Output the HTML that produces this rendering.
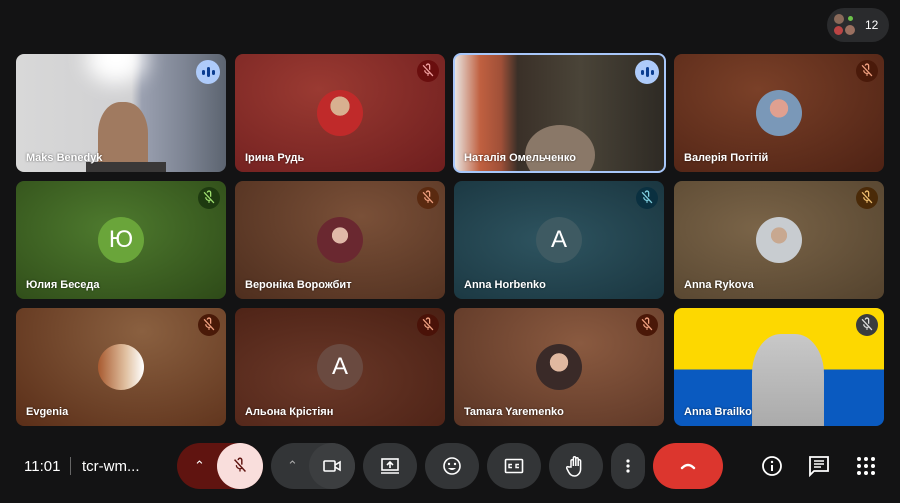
<!DOCTYPE html>
<html><head><meta charset="utf-8"><style>
*{margin:0;padding:0;box-sizing:border-box}
body{width:900px;height:503px;background:#131314;position:relative;overflow:hidden;font-family:"Liberation Sans","DejaVu Sans",sans-serif;color:#fff}
.t{position:absolute;width:210px;height:118px;border-radius:8px;overflow:hidden}
.n{position:absolute;left:10px;bottom:8px;font-size:11px;font-weight:bold;color:#fff;text-shadow:0 0 2px rgba(0,0,0,.6)}
.av{position:absolute;left:82px;top:36px;width:46px;height:46px;border-radius:50%;display:flex;align-items:center;justify-content:center;font-size:24px;color:#fff}
.m{position:absolute;right:6px;top:6px;width:22px;height:22px;border-radius:50%;display:flex;align-items:center;justify-content:center}
.sp{position:absolute;right:6px;top:6px;width:24px;height:24px;border-radius:50%;background:#aecbfa;display:flex;align-items:center;justify-content:center;gap:2px}
.sp i{display:block;width:3px;background:#0b3d91;border-radius:2px}
.b{position:absolute;top:443px;height:46px;border-radius:23px;background:#333537;display:flex;align-items:center;justify-content:center}
</style></head><body>
<svg width="0" height="0" style="position:absolute"><defs>
<g id="mo"><path d="M9 3.5a2 2 0 0 1 4 0v5" fill="none" stroke="currentColor" stroke-width="1.6"/><path d="M7 9a4 4 0 0 0 6 3.4M11 13v3" fill="none" stroke="currentColor" stroke-width="1.4"/><path d="M5 3l12 13" stroke="currentColor" stroke-width="1.6"/></g>
</defs></svg>

<div style="position:absolute;left:827px;top:8px;width:62px;height:34px;border-radius:17px;background:#2a2b2d"></div>
<div style="position:absolute;left:834px;top:14px;width:10px;height:10px;border-radius:50%;background:#8a6a5a"></div>
<div style="position:absolute;left:848px;top:16px;width:5px;height:5px;border-radius:50%;background:#6cc24a"></div>
<div style="position:absolute;left:834px;top:26px;width:9px;height:9px;border-radius:50%;background:#b44"></div>
<div style="position:absolute;left:845px;top:25px;width:10px;height:10px;border-radius:50%;background:#9a7060"></div>
<div style="position:absolute;left:865px;top:18px;font-size:12px">12</div>

<!-- row1 -->
<div class="t" style="left:16px;top:54px;background:linear-gradient(90deg,#d8d8d8 0%,#d0d0d2 55%,#9aa0b0 60%,#7e8594 80%,#5c6470 100%)">
 <div style="position:absolute;left:70px;top:-20px;width:60px;height:50px;border-radius:50%;background:#fff;filter:blur(10px)"></div>
 <div style="position:absolute;left:82px;top:48px;width:50px;height:70px;border-radius:45% 45% 10px 10px;background:#a07a60"></div>
 <div style="position:absolute;left:70px;top:108px;width:80px;height:20px;background:#3a3838"></div>
 <div class="sp"><i style="height:5px"></i><i style="height:10px"></i><i style="height:5px"></i></div>
 <div class="n">Maks Benedyk</div></div>
<div class="t" style="left:235px;top:54px;background:radial-gradient(ellipse at 40% 30%,#9a3a32,#6e1e1e)">
 <div class="av" style="background:radial-gradient(circle at 50% 35%,#d8b090 0 25%,#c02a2a 26% 100%)"></div>
 <div class="m" style="background:#6a0e0e;color:#f1a0a0"><svg width="18" height="18" viewBox="0 0 22 20"><use href="#mo"/></svg></div>
 <div class="n">Ірина Рудь</div></div>
<div class="t" style="left:453px;top:53px;width:213px;height:120px;border:2px solid #a8c7fa;background:linear-gradient(90deg,#e8e4e0 0%,#c06040 12%,#a05038 22%,#3a3028 30%,#4a4438 60%,#2e2a24 100%)">
 <div style="position:absolute;left:70px;top:70px;width:70px;height:60px;border-radius:50%;background:#8a7868"></div>
 <div class="sp" style="right:5px;top:5px"><i style="height:5px"></i><i style="height:10px"></i><i style="height:5px"></i></div>
 <div class="n" style="left:9px;bottom:7px">Наталія Омельченко</div></div>
<div class="t" style="left:674px;top:54px;background:radial-gradient(ellipse at 40% 30%,#7a4028,#4e2214)">
 <div class="av" style="background:radial-gradient(circle at 50% 40%,#e0a090 0 25%,#7a98b8 26% 100%)"></div>
 <div class="m" style="background:#4a1a0a;color:#f0a080"><svg width="18" height="18" viewBox="0 0 22 20"><use href="#mo"/></svg></div>
 <div class="n">Валерія Потітій</div></div>
<!-- row2 -->
<div class="t" style="left:16px;top:181px;background:radial-gradient(ellipse at 45% 40%,#4e7a2e,#2e4a18)">
 <div class="av" style="background:#6aa53a">Ю</div>
 <div class="m" style="background:#1e3a10;color:#a0e070"><svg width="18" height="18" viewBox="0 0 22 20"><use href="#mo"/></svg></div>
 <div class="n">Юлия Беседа</div></div>
<div class="t" style="left:235px;top:181px;background:radial-gradient(ellipse at 60% 30%,#7a5038,#4e2e1e)">
 <div class="av" style="background:radial-gradient(circle at 50% 40%,#e0b8a8 0 22%,#6a2830 23% 100%)"></div>
 <div class="m" style="background:#5a2a10;color:#f0a080"><svg width="18" height="18" viewBox="0 0 22 20"><use href="#mo"/></svg></div>
 <div class="n">Вероніка Ворожбит</div></div>
<div class="t" style="left:454px;top:181px;background:radial-gradient(ellipse at 45% 50%,#2e5460,#1a3640)">
 <div class="av" style="background:#3e5a62">A</div>
 <div class="m" style="background:#0a3040;color:#80d0e0"><svg width="18" height="18" viewBox="0 0 22 20"><use href="#mo"/></svg></div>
 <div class="n">Anna Horbenko</div></div>
<div class="t" style="left:674px;top:181px;background:radial-gradient(ellipse at 40% 40%,#7a6448,#54432e)">
 <div class="av" style="background:radial-gradient(circle at 50% 40%,#c8a890 0 22%,#c8ccd0 23% 100%)"></div>
 <div class="m" style="background:#4a2a08;color:#f0c070"><svg width="18" height="18" viewBox="0 0 22 20"><use href="#mo"/></svg></div>
 <div class="n">Anna Rykova</div></div>
<!-- row3 -->
<div class="t" style="left:16px;top:308px;background:radial-gradient(ellipse at 60% 20%,#8a6040,#5a2e18)">
 <div class="av" style="background:linear-gradient(90deg,#a85a30,#e0c0a0 60%,#fff)"></div>
 <div class="m" style="background:#4a1a08;color:#f0a080"><svg width="18" height="18" viewBox="0 0 22 20"><use href="#mo"/></svg></div>
 <div class="n">Evgenia</div></div>
<div class="t" style="left:235px;top:308px;background:radial-gradient(ellipse at 40% 60%,#6a3828,#4a2014)">
 <div class="av" style="background:#6a4a40">A</div>
 <div class="m" style="background:#4a1208;color:#f0a080"><svg width="18" height="18" viewBox="0 0 22 20"><use href="#mo"/></svg></div>
 <div class="n">Альона Крістіян</div></div>
<div class="t" style="left:454px;top:308px;background:radial-gradient(ellipse at 60% 30%,#8a5a40,#5a3424)">
 <div class="av" style="background:radial-gradient(circle at 50% 40%,#e0b8a0 0 25%,#3a2a28 26% 100%)"></div>
 <div class="m" style="background:#4a1808;color:#f0a080"><svg width="18" height="18" viewBox="0 0 22 20"><use href="#mo"/></svg></div>
 <div class="n">Tamara Yaremenko</div></div>
<div class="t" style="left:674px;top:308px;background:linear-gradient(180deg,#fdd800 0 52%,#0a5ac0 52% 100%)">
 <div style="position:absolute;left:78px;top:26px;width:72px;height:100px;border-radius:40% 40% 0 0;background:linear-gradient(#c8c8c8,#a8a8a8)"></div>
 <div class="m" style="background:#3a3c3e;color:#ddd"><svg width="18" height="18" viewBox="0 0 22 20"><use href="#mo"/></svg></div>
 <div class="n">Anna Brailko</div></div>

<!-- bottom bar -->
<div style="position:absolute;left:24px;top:458px;font-size:15px">11:01</div>
<div style="position:absolute;left:70px;top:457px;width:1px;height:18px;background:#666"></div>
<div style="position:absolute;left:82px;top:458px;font-size:15px">tcr-wm...</div>

<div class="b" style="left:177px;width:86px;background:#601410;justify-content:flex-start;padding-left:17px;font-size:13px">&#8963;</div>
<div class="b" style="left:217px;width:46px;background:#f9dedc;color:#601410"><svg width="20" height="20" viewBox="0 0 22 20"><use href="#mo"/></svg></div>
<div class="b" style="left:271px;width:84px;justify-content:flex-start;padding-left:16px;color:#aaa;font-size:13px">&#8963;</div>
<div class="b" style="left:309px;width:46px;background:#3c3e40"><svg width="18" height="14" viewBox="0 0 18 14"><rect x="1" y="2" width="11" height="10" rx="1" fill="none" stroke="#fff" stroke-width="1.6"/><path d="M12 6l5-3v8l-5-3" fill="none" stroke="#fff" stroke-width="1.6"/></svg></div>
<div class="b" style="left:363px;width:54px"><svg width="20" height="18" viewBox="0 0 20 18"><rect x="2" y="2" width="16" height="11" fill="none" stroke="#fff" stroke-width="1.6"/><path d="M1 16h18M10 11V5M7 8l3-3 3 3" fill="none" stroke="#fff" stroke-width="1.6"/></svg></div>
<div class="b" style="left:425px;width:54px"><svg width="20" height="20" viewBox="0 0 20 20"><circle cx="10" cy="10" r="8" fill="none" stroke="#fff" stroke-width="1.6"/><circle cx="7" cy="8" r="1.2" fill="#fff"/><circle cx="13" cy="8" r="1.2" fill="#fff"/><path d="M6 12q4 4 8 0z" fill="#fff"/></svg></div>
<div class="b" style="left:487px;width:54px"><svg width="20" height="16" viewBox="0 0 20 16"><rect x="1.5" y="1.5" width="17" height="13" rx="1" fill="none" stroke="#fff" stroke-width="1.6"/><path d="M8 6.5H5v3h3M15 6.5h-3v3h3" fill="none" stroke="#fff" stroke-width="1.4"/></svg></div>
<div class="b" style="left:549px;width:54px"><svg width="20" height="22" viewBox="0 0 20 22"><path d="M5 12V6a1.2 1.2 0 0 1 2.4 0v5V3a1.2 1.2 0 0 1 2.4 0v8V4a1.2 1.2 0 0 1 2.4 0v7V6a1.2 1.2 0 0 1 2.4 0v8c0 4-3 7-6 7-3 0-5-2-6-4l-2-4a1.2 1.2 0 0 1 2-1z" fill="none" stroke="#fff" stroke-width="1.5"/></svg></div>
<div class="b" style="left:611px;width:34px"><svg width="4" height="16"><circle cx="2" cy="3" r="1.6" fill="#fff"/><circle cx="2" cy="8" r="1.6" fill="#fff"/><circle cx="2" cy="13" r="1.6" fill="#fff"/></svg></div>
<div class="b" style="left:653px;width:70px;background:#dc362e"><svg width="16" height="8" viewBox="0 0 16 8"><path d="M2 6q6-6 12 0" fill="none" stroke="#fff" stroke-width="2.4" stroke-linecap="round"/></svg></div>

<svg style="position:absolute;left:761px;top:455px" width="22" height="22" viewBox="0 0 22 22"><circle cx="11" cy="11" r="9" fill="none" stroke="#fff" stroke-width="1.8"/><path d="M11 10v6" stroke="#fff" stroke-width="2"/><circle cx="11" cy="7" r="1.2" fill="#fff"/></svg>
<svg style="position:absolute;left:808px;top:455px" width="22" height="22" viewBox="0 0 22 22"><path d="M2 2h18v14H6l-4 4z" fill="none" stroke="#fff" stroke-width="1.8"/><path d="M6 6h10M6 9h10M6 12h7" stroke="#fff" stroke-width="1.6"/></svg>
<svg style="position:absolute;left:856px;top:456px" width="20" height="20" viewBox="0 0 20 20" fill="#fff"><circle cx="3" cy="3" r="2"/><circle cx="10" cy="3" r="2"/><circle cx="17" cy="3" r="2"/><circle cx="3" cy="10" r="2"/><circle cx="10" cy="10" r="2"/><circle cx="17" cy="10" r="2"/><circle cx="3" cy="17" r="2"/><circle cx="10" cy="17" r="2"/><circle cx="17" cy="17" r="2"/></svg>
</body></html>
